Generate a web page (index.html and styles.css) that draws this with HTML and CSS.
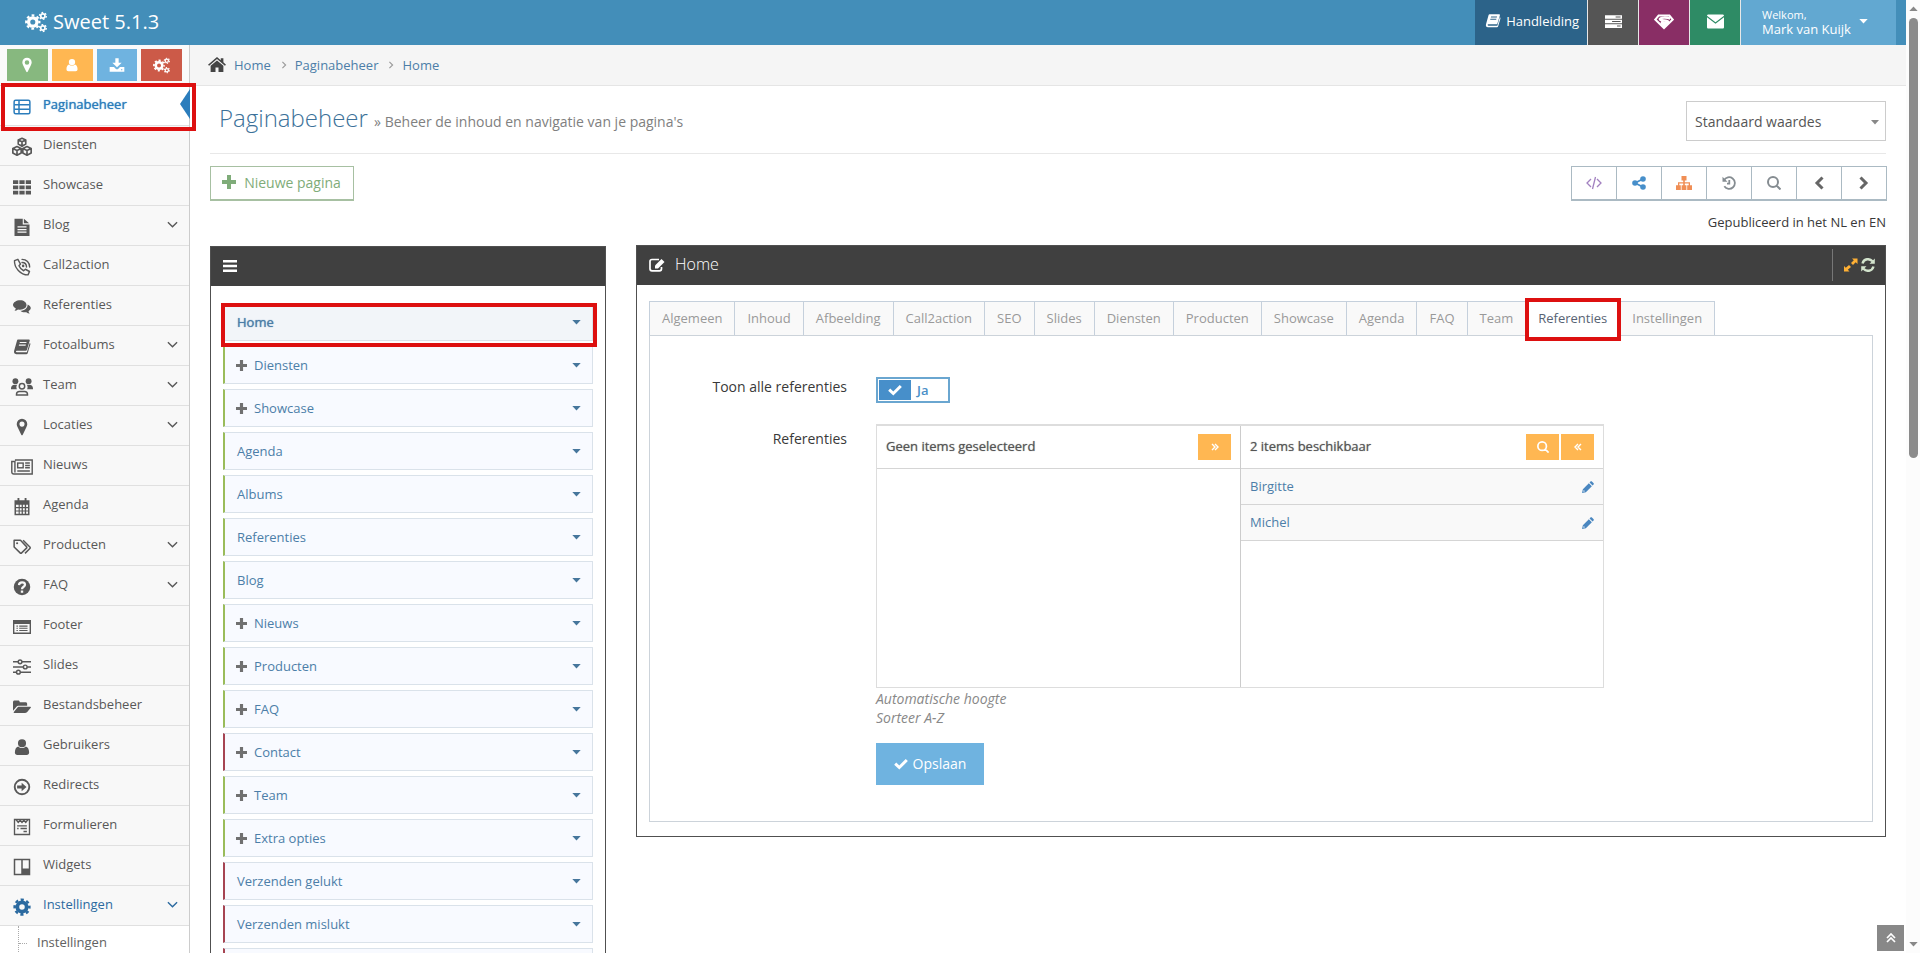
FILE: index.html
```html
<!DOCTYPE html>
<html lang="nl">
<head>
<meta charset="utf-8">
<title>Sweet 5.1.3 - Paginabeheer</title>
<link rel="stylesheet" href="styles.css">
</head>
<body>

<!-- Icon sprite -->
<svg class="sprite" aria-hidden="true">
  <symbol id="i-cogs" viewBox="0 0 24 24">
    <g fill="none" stroke="currentColor">
      <circle cx="8.5" cy="12" r="4.6" stroke-width="3.6"/>
      <circle cx="8.5" cy="12" r="7.2" stroke-width="2.4" stroke-dasharray="3 2.65" stroke-dashoffset="1.5"/>
      <circle cx="19.5" cy="5.4" r="2.3" stroke-width="1.8"/>
      <circle cx="19.5" cy="5.4" r="3.7" stroke-width="1.5" stroke-dasharray="1.9 1.97"/>
      <circle cx="19.5" cy="18.6" r="2.3" stroke-width="1.8"/>
      <circle cx="19.5" cy="18.6" r="3.7" stroke-width="1.5" stroke-dasharray="1.9 1.97"/>
    </g>
  </symbol>
  <symbol id="i-cog" viewBox="0 0 24 24">
    <g fill="none" stroke="currentColor">
      <circle cx="12" cy="12" r="6.2" stroke-width="5"/>
      <circle cx="12" cy="12" r="9.8" stroke-width="3.4" stroke-dasharray="4.2 3.5" stroke-dashoffset="2.1"/>
    </g>
  </symbol>
  <symbol id="i-marker" viewBox="0 0 24 24"><path fill="currentColor" fill-rule="evenodd" d="M12 1a7 7 0 0 1 7 7c0 2-.6 3-1.200 4.300L13 22.200c-.4.900-1.600.900-2 0L6.200 12.300C5.600 11 5 10 5 8a7 7 0 0 1 7-7zm0 3.700a3.400 3.400 0 1 0 0 6.800 3.400 3.400 0 0 0 0-6.800z"/></symbol>
  <symbol id="i-user" viewBox="0 0 24 24"><path fill="currentColor" d="M12 1.500a5.300 5.300 0 0 1 0 10.800 5.300 5.300 0 0 1 0-10.800zM7 11.200c3 3 7 3 10 0 3 .8 4.500 4 4.500 8 0 2-1.300 3.300-3.300 3.300H5.800c-2 0-3.300-1.300-3.300-3.300 0-4 1.500-7.200 4.500-8z"/></symbol>
  <symbol id="i-download" viewBox="0 0 24 24"><path fill="currentColor" fill-rule="evenodd" d="M9.500 2h5v6.500H19l-7 7-7-7h4.500zM1 15h6.500l2.500 2.500c1 1 3 1 4 0l2.500-2.500H23v7H1zm17 3.200v1.600h2v-1.600z"/></symbol>
  <symbol id="i-list" viewBox="0 0 24 24"><g fill="none" stroke="currentColor" stroke-width="2"><rect x="1.500" y="3" width="21" height="18" rx="2"/><path d="M2 9h20M2 15h20M8 3v18"/></g></symbol>
  <symbol id="i-cubes" viewBox="0 0 24 24"><g fill="none" stroke="currentColor" stroke-width="2" stroke-linejoin="round"><path d="M12 1.500l4.500 2v5L12 11 7.500 8.500v-5zM7.500 3.500L12 5.700l4.500-2.200M12 5.700V11"/><path d="M6 11.500l5 2.300v5.400l-5 2.600-5-2.600v-5.400zM1 13.800l5 2.400 5-2.400M6 16.200v5.600"/><path d="M18 11.500l5 2.300v5.400l-5 2.600-5-2.600v-5.400zM13 13.800l5 2.400 5-2.400M18 16.200v5.600"/></g></symbol>
  <symbol id="i-grid" viewBox="0 0 24 24"><path fill="currentColor" d="M0 3h7v5H0zM8.500 3h7v5h-7zM17 3h7v5h-7zM0 10h7v5H0zM8.500 10h7v5h-7zM17 10h7v5h-7zM0 17h7v5H0zM8.500 17h7v5h-7zM17 17h7v5h-7z"/></symbol>
  <symbol id="i-file" viewBox="0 0 24 24"><path fill="currentColor" fill-rule="evenodd" d="M2 1h11v7.500h9V24H2zM14.500 1l7 6h-7zM6 11v1.700h12V11zm0 3.500v1.700h12v-1.700zm0 3.500v1.700h12V18z"/></symbol>
  <symbol id="i-phone" viewBox="0 0 24 24"><g fill="none" stroke="currentColor" stroke-width="1.900" stroke-linecap="round" stroke-linejoin="round"><path d="M6.500 1.800L2 3.500C1.500 13 10 22.500 20 22.500l2-4.500-5.500-3-2.300 2c-3-1.500-5-3.800-6.200-6.700l2-2.200z"/><path d="M12 6c3.500 0 6 2.500 6 6M12 1.800c6 0 10.200 4.200 10.200 10.200"/></g><circle cx="13.500" cy="10.500" r="1.700" fill="currentColor"/></symbol>
  <symbol id="i-comments" viewBox="0 0 24 24"><path fill="currentColor" d="M9.500 3C14.500 3 18 5.800 18 9.300s-3.500 6.200-8.500 6.200c-1 0-1.900-.1-2.800-.300-1.300 1-3 1.700-4.700 1.800 1-1 1.600-2 1.700-3.200C2.100 12.700 0 11.100 0 9.300 0 5.800 4.500 3 9.500 3z"/><path fill="currentColor" d="M19.500 8.500c2.300 1 4.200 2.700 4.200 4.800 0 1.700-1.500 3.200-3 4.200.1 1.200.7 2.200 1.700 3.200-1.800-.1-3.400-.8-4.700-1.800-3.200.6-6-.1-7.800-1.900 5.500-.2 9.800-3.500 9.600-8.500z"/></symbol>
  <symbol id="i-book" viewBox="0 0 24 24"><path fill="currentColor" fill-rule="evenodd" d="M7 2h14c1 0 1.600.8 1.300 1.800L18.500 16c-.2.700-.8 1-1.500 1H5c-1.400 0-1.400 2 0 2h13.500l3.700-12.500c.9.400 1.200 1 .9 2L19.700 20c-.2.900-.8 1.500-1.700 1.500H4.500C2 21.500.8 19.500 1.500 17L5.300 3.500C5.600 2.500 6 2 7 2zm2.200 3.200l-.5 1.500h9l.5-1.500zm-1 3.600l-.5 1.500h9l.5-1.500z"/></symbol>
  <symbol id="i-team" viewBox="0 0 30 24"><g fill="currentColor"><circle cx="6" cy="4" r="4"/><circle cx="24" cy="4" r="4"/><path d="M0 14c0-3 2-5 5-5h3.500c-1.500 2-1.500 4-.5 6H0zM30 14c0-3-2-5-5-5h-3.500c1.500 2 1.500 4 .5 6h8z"/></g><g fill="none" stroke="currentColor" stroke-width="2"><circle cx="15" cy="11" r="3.700"/><path d="M7.500 23v-1c0-2.300 1.500-4 4-4h7c2.500 0 4 1.700 4 4v1z"/></g></symbol>
  <symbol id="i-news" viewBox="0 0 28 22"><g fill="none" stroke="currentColor" stroke-width="1.800"><path d="M5 2h22v18H3.500C2 20 1 19 1 17.500V4h4v14"/><rect x="8.500" y="6" width="7" height="6"/><path d="M18 6h6M18 9h6M18 12h6M8 16h16"/></g></symbol>
  <symbol id="i-calendar" viewBox="0 0 24 24"><path fill="currentColor" fill-rule="evenodd" d="M6 0h2.500v3h7V0H18v3h4v20H2V3h4zM4 9v3h3.500V9zm5 0v3h2.500V9zm4.200 0v3h2.500V9zm4.300 0v3H20V9zM4 13.500v3h3.500v-3zm5 0v3h2.500v-3zm4.200 0v3h2.500v-3zm4.300 0v3H20v-3zM4 18v3h3.500v-3zm5 0v3h2.500v-3zm4.200 0v3h2.500v-3zm4.300 0v3H20v-3z"/></symbol>
  <symbol id="i-tags" viewBox="0 0 24 24"><g fill="none" stroke="currentColor" stroke-width="2" stroke-linejoin="round"><path d="M1.500 3h8.500l8 8.500c.6.600.6 1.400 0 2l-6.500 6.300c-.6.600-1.400.6-2 0L1.500 12z"/><path d="M13.500 3l9 9c.6.600.6 1.400 0 2l-6.500 6.500"/></g><circle cx="5.500" cy="7" r="1.400" fill="currentColor"/></symbol>
  <symbol id="i-question" viewBox="0 0 24 24"><circle cx="12" cy="12" r="11" fill="currentColor"/><path fill="none" stroke="#f8f8f8" stroke-width="3" d="M8 9.500c.3-5 8-4.500 8-.5 0 2.700-4 2.700-4 6"/><path fill="#f8f8f8" d="M10.400 16.700h3.200v3h-3.200z"/></symbol>
  <symbol id="i-listalt" viewBox="0 0 26 22"><path fill="none" stroke="currentColor" stroke-width="2" d="M1 2h24v18H1z"/><path fill="currentColor" d="M1 2h24v4.500H1zM5 9h2v1.500H5zM9 9h12v1.500H9zM5 12.200h2v1.500H5zM9 12.200h12v1.500H9zM5 15.400h2v1.500H5zM9 15.400h12v1.500H9z"/></symbol>
  <symbol id="i-sliders" viewBox="0 0 26 24"><g fill="none" stroke="currentColor" stroke-width="2.100"><path d="M0 4.500h7.500M13 4.500h13M0 12h15M20.500 12H26M0 19.500h5M10.500 19.500H26"/><circle cx="10.200" cy="4.500" r="2.700"/><circle cx="17.700" cy="12" r="2.700"/><circle cx="7.800" cy="19.500" r="2.700"/></g></symbol>
  <symbol id="i-folder" viewBox="0 0 28 22"><path fill="currentColor" d="M0 3.500C0 2 1 1 2.500 1H8c1.500 0 2.500 1 2.500 2.500h9c1.500 0 2.500 1 2.500 2.500v3H9.500c-2 0-3.500.8-4.700 2.200L0 17zM9.500 10.500H27c1 0 1.200.8.6 1.600l-5.500 6.600c-1 1.200-2.200 1.800-3.600 1.800H2c-1 0-1.400-.8-.7-1.600l5-6.400c.9-1.200 1.800-2 3.200-2z"/></symbol>
  <symbol id="i-arrow" viewBox="0 0 24 24"><circle cx="12" cy="12" r="9.700" fill="none" stroke="currentColor" stroke-width="2.500"/><path fill="currentColor" d="M5.500 10h6V6.300l6.500 5.700-6.500 5.700V14h-6z"/></symbol>
  <symbol id="i-form" viewBox="0 0 24 24"><g fill="none" stroke="currentColor" stroke-width="1.800"><path d="M2 2h20v20H2z"/><path d="M4 2l3 4 2.500-3L12 6l2.500-3L17 6l3-4M5.500 10.500h13M5.500 14h2M10 14h8.500M14 18h4.500"/></g></symbol>
  <symbol id="i-widgets" viewBox="0 0 24 24"><path fill="none" stroke="currentColor" stroke-width="2" d="M2 2h20v20H2zM12 2v20"/><path fill="currentColor" d="M12 14h10v8H12z"/></symbol>
  <symbol id="i-angle" viewBox="0 0 12 8"><path fill="none" stroke="currentColor" stroke-width="1.500" d="M1 1l5 5 5-5"/></symbol>
  <symbol id="i-angle-right" viewBox="0 0 6 10"><path fill="none" stroke="currentColor" stroke-width="1.400" d="M1 1l4 4-4 4"/></symbol>
  <symbol id="i-home" viewBox="0 0 24 20"><path fill="currentColor" d="M12 0l5 4.200V1.500h3.500V7L24 10.200l-1.500 1.500L12 2.800 1.500 11.700 0 10.200zM12 4.500l8.500 7.200V20H14v-6h-4v6H3.500v-8.300z"/></symbol>
  <symbol id="i-tasks" viewBox="0 0 24 18"><path fill="currentColor" fill-rule="evenodd" d="M0 0h24v5H0zM15 1.800v1.400h7V1.800zM0 6.500h24v5H0zM10 8.300v1.400h12V8.300zM0 13h24v5H0zM17 14.800v1.400h5v-1.400z"/></symbol>
  <symbol id="i-gem" viewBox="0 0 24 18"><g fill="none" stroke="currentColor"><path stroke-width="2.400" d="M5.500 1.200h13l4 4.800L12 16.300 1.500 6z"/><path stroke-width="3" d="M19.500 5C16 3.300 7.500 3.200 7 5.500s10.500 1 10 3.500c-.4 1.800-5 2-9 .6"/></g><path fill="currentColor" d="M8 11.500h8L12 16z"/></symbol>
  <symbol id="i-mail" viewBox="0 0 24 20"><path fill="currentColor" d="M2 0h20c1.200 0 2 .8 2 2l-12 9L0 2C0 .8.800 0 2 0zM0 4l12 9 12-9v14c0 1.200-.8 2-2 2H2c-1.200 0-2-.8-2-2z"/></symbol>
  <symbol id="i-caret" viewBox="0 0 10 6"><path fill="currentColor" d="M0 0h10L5 5.500z"/></symbol>
  <symbol id="i-plus" viewBox="0 0 14 14"><path fill="currentColor" d="M5 0h4v5h5v4H9v5H5V9H0V5h5z"/></symbol>
  <symbol id="i-code" viewBox="0 0 16 12"><path fill="none" stroke="currentColor" stroke-width="1.300" d="M5 2L1 6l4 4M11 2l4 4-4 4M9.500 0l-3 12"/></symbol>
  <symbol id="i-share" viewBox="0 0 14 14"><g fill="currentColor"><circle cx="11" cy="3" r="2.800"/><circle cx="3" cy="7" r="2.800"/><circle cx="11" cy="11" r="2.800"/></g><path fill="none" stroke="currentColor" stroke-width="1.800" d="M11 3L3 7l8 4"/></symbol>
  <symbol id="i-sitemap" viewBox="0 0 16 14"><path fill="currentColor" d="M5.500 0h5v4.500h-1.700V6.300H14v3h2V14h-4.800V9.300h1.500V7.600H8.800v1.700h1.600V14H5.600V9.300h1.600V7.600H3.300v1.700h1.500V14H0V9.300h2v-3h5.200V4.500H5.500z"/></symbol>
  <symbol id="i-history" viewBox="0 0 14 14"><path fill="none" stroke="currentColor" stroke-width="1.800" d="M2 4.200a5.800 5.800 0 1 1 .3 6.100M7.300 4v3.700H5"/><path fill="currentColor" d="M.5.800v5h5z"/></symbol>
  <symbol id="i-search" viewBox="0 0 14 14"><path fill="none" stroke="currentColor" stroke-width="2" d="M6 1a5 5 0 1 1 0 10A5 5 0 0 1 6 1zM9.500 9.500l4 4"/></symbol>
  <symbol id="i-prev" viewBox="0 0 10 14"><path fill="none" stroke="currentColor" stroke-width="3" d="M8.500 1.500L3 7l5.500 5.500"/></symbol>
  <symbol id="i-next" viewBox="0 0 10 14"><path fill="none" stroke="currentColor" stroke-width="3" d="M1.500 1.500L7 7l-5.500 5.500"/></symbol>
  <symbol id="i-bars" viewBox="0 0 14 12"><path fill="currentColor" d="M0 0h14v2.600H0zM0 4.700h14v2.600H0zM0 9.400h14V12H0z"/></symbol>
  <symbol id="i-edit" viewBox="0 0 16 14"><path fill="none" stroke="currentColor" stroke-width="1.700" d="M10 1.500H3C1.700 1.500 1 2.200 1 3.500v7.300c0 1.300.7 2 2 2h7.500c1.300 0 2-.7 2-2V9"/><path fill="currentColor" d="M12.500 1L15.500 4 9 10.500H6v-3z"/></symbol>
  <symbol id="i-expand" viewBox="0 0 14 14"><path fill="currentColor" d="M8 .5h5.500V6l-1.800-1.800L9 7 7 5l2.800-2.700zM0 8l1.800 1.800L5 7l2 2-3.200 2.700L5.500 13.500H0z"/></symbol>
  <symbol id="i-refresh" viewBox="0 0 14 14"><path fill="none" stroke="currentColor" stroke-width="2.400" d="M1.500 5.500c1.500-5 7-5.500 10-2.200M12.500 8.500c-1.500 5-7 5.500-10 2.200"/><path fill="currentColor" d="M13.800.5v5.300H8.500zM.2 13.500V8.200h5.300z"/></symbol>
  <symbol id="i-check" viewBox="0 0 14 11"><path fill="none" stroke="currentColor" stroke-width="3" d="M1.200 5.200L5.300 9l7.500-7.500"/></symbol>
  <symbol id="i-dbl-right" viewBox="0 0 8 8"><path fill="none" stroke="currentColor" stroke-width="1.400" d="M1 1l3 3-3 3M4 1l3 3-3 3"/></symbol>
  <symbol id="i-dbl-left" viewBox="0 0 8 8"><path fill="none" stroke="currentColor" stroke-width="1.400" d="M7 1L4 4l3 3M4 1L1 4l3 3"/></symbol>
  <symbol id="i-dbl-up" viewBox="0 0 10 10"><path fill="none" stroke="currentColor" stroke-width="1.700" d="M1 5l4-4 4 4M1 9l4-4 4 4"/></symbol>
  <symbol id="i-pencil" viewBox="0 0 14 14"><path fill="currentColor" fill-rule="evenodd" d="M10.500 0c.6 0 3.500 2.900 3.500 3.500L12.300 5.200 8.800 1.700zM8 2.500L11.500 6 4.500 13 0 14l1-4.500zM2 10.500l-.5 2 2-.5z"/></symbol>
</svg>

<div class="window">
<div class="page">

<header class="navbar">
  <a href="#" class="brand"><svg class="icon-brand"><use href="#i-cogs"/></svg>Sweet 5.1.3</a>
  <nav class="navbar-nav">
    <a href="#" class="nav-manual"><svg class="icon-16"><use href="#i-book"/></svg>Handleiding</a>
    <a href="#" class="nav-icon grey" aria-label="Taken"><svg class="icon-17"><use href="#i-tasks"/></svg></a>
    <a href="#" class="nav-icon purple" aria-label="Super"><svg class="icon-20"><use href="#i-gem"/></svg></a>
    <a href="#" class="nav-icon green" aria-label="Berichten"><svg class="icon-17"><use href="#i-mail"/></svg></a>
    <a href="#" class="nav-user"><span><small>Welkom,</small>Mark van Kuijk</span><svg class="caret"><use href="#i-caret"/></svg></a>
  </nav>
</header>

<div class="main">

<aside class="sidebar">
  <div class="shortcuts">
    <button class="green" aria-label="Locatie"><svg class="icon-16"><use href="#i-marker"/></svg></button>
    <button class="orange" aria-label="Gebruiker"><svg class="icon-14"><use href="#i-user"/></svg></button>
    <button class="blue" aria-label="Download"><svg class="icon-16"><use href="#i-download"/></svg></button>
    <button class="red" aria-label="Opties"><svg class="icon-17"><use href="#i-cogs"/></svg></button>
  </div>
  <ul class="menu">
    <li class="active"><a href="#"><svg><use href="#i-list"/></svg><span>Paginabeheer</span></a><i class="mark"></i></li>
    <li><a href="#"><svg class="wide"><use href="#i-cubes"/></svg><span>Diensten</span></a></li>
    <li><a href="#"><svg><use href="#i-grid"/></svg><span>Showcase</span></a></li>
    <li><a href="#"><svg><use href="#i-file"/></svg><span>Blog</span><svg class="angle"><use href="#i-angle"/></svg></a></li>
    <li><a href="#"><svg><use href="#i-phone"/></svg><span>Call2action</span></a></li>
    <li><a href="#"><svg><use href="#i-comments"/></svg><span>Referenties</span></a></li>
    <li><a href="#"><svg><use href="#i-book"/></svg><span>Fotoalbums</span><svg class="angle"><use href="#i-angle"/></svg></a></li>
    <li><a href="#"><svg class="wide"><use href="#i-team"/></svg><span>Team</span><svg class="angle"><use href="#i-angle"/></svg></a></li>
    <li><a href="#"><svg><use href="#i-marker"/></svg><span>Locaties</span><svg class="angle"><use href="#i-angle"/></svg></a></li>
    <li><a href="#"><svg class="wide"><use href="#i-news"/></svg><span>Nieuws</span></a></li>
    <li><a href="#"><svg><use href="#i-calendar"/></svg><span>Agenda</span></a></li>
    <li><a href="#"><svg><use href="#i-tags"/></svg><span>Producten</span><svg class="angle"><use href="#i-angle"/></svg></a></li>
    <li><a href="#"><svg><use href="#i-question"/></svg><span>FAQ</span><svg class="angle"><use href="#i-angle"/></svg></a></li>
    <li><a href="#"><svg><use href="#i-listalt"/></svg><span>Footer</span></a></li>
    <li><a href="#"><svg><use href="#i-sliders"/></svg><span>Slides</span></a></li>
    <li><a href="#"><svg><use href="#i-folder"/></svg><span>Bestandsbeheer</span></a></li>
    <li><a href="#"><svg><use href="#i-user"/></svg><span>Gebruikers</span></a></li>
    <li><a href="#"><svg><use href="#i-arrow"/></svg><span>Redirects</span></a></li>
    <li><a href="#"><svg><use href="#i-form"/></svg><span>Formulieren</span></a></li>
    <li><a href="#"><svg><use href="#i-widgets"/></svg><span>Widgets</span></a></li>
    <li class="open"><a href="#"><svg><use href="#i-cog"/></svg><span>Instellingen</span><svg class="angle"><use href="#i-angle"/></svg></a>
      <ul class="submenu">
        <li><a href="#">Instellingen</a></li>
      </ul>
    </li>
  </ul>
</aside>

<main class="content">
  <nav class="breadcrumbs">
    <svg class="icon-home"><use href="#i-home"/></svg>
    <a href="#">Home</a>
    <svg class="sep"><use href="#i-angle-right"/></svg>
    <a href="#">Paginabeheer</a>
    <svg class="sep"><use href="#i-angle-right"/></svg>
    <a href="#">Home</a>
  </nav>

  <div class="page-content">
    <div class="page-header">
      <h1>Paginabeheer <small>» Beheer de inhoud en navigatie van je pagina's</small></h1>
      <div class="select">
        <select aria-label="Waardes"><option>Standaard waardes</option></select>
        <svg class="caret"><use href="#i-caret"/></svg>
      </div>
    </div>

    <div class="toolbar">
      <button class="btn-new"><svg class="icon-14"><use href="#i-plus"/></svg>Nieuwe pagina</button>
      <div class="btn-group">
        <button class="purple" aria-label="Code"><svg class="icon-16"><use href="#i-code"/></svg></button>
        <button class="blue" aria-label="Delen"><svg class="icon-14"><use href="#i-share"/></svg></button>
        <button class="orange" aria-label="Sitemap"><svg class="icon-16"><use href="#i-sitemap"/></svg></button>
        <button aria-label="Geschiedenis"><svg class="icon-14"><use href="#i-history"/></svg></button>
        <button aria-label="Zoeken"><svg class="icon-14"><use href="#i-search"/></svg></button>
        <button class="dark" aria-label="Vorige"><svg class="icon-14"><use href="#i-prev"/></svg></button>
        <button class="dark" aria-label="Volgende"><svg class="icon-14"><use href="#i-next"/></svg></button>
      </div>
    </div>
    <p class="published">Gepubliceerd in het NL en EN</p>

    <div class="columns">
      <section class="widget tree">
        <div class="widget-header"><svg class="icon-14"><use href="#i-bars"/></svg></div>
        <ul class="pages">
          <li class="selected"><a href="#">Home</a><svg class="caret"><use href="#i-caret"/></svg></li>
          <li><svg class="plus"><use href="#i-plus"/></svg><a href="#">Diensten</a><svg class="caret"><use href="#i-caret"/></svg></li>
          <li><svg class="plus"><use href="#i-plus"/></svg><a href="#">Showcase</a><svg class="caret"><use href="#i-caret"/></svg></li>
          <li><a href="#">Agenda</a><svg class="caret"><use href="#i-caret"/></svg></li>
          <li><a href="#">Albums</a><svg class="caret"><use href="#i-caret"/></svg></li>
          <li><a href="#">Referenties</a><svg class="caret"><use href="#i-caret"/></svg></li>
          <li><a href="#">Blog</a><svg class="caret"><use href="#i-caret"/></svg></li>
          <li><svg class="plus"><use href="#i-plus"/></svg><a href="#">Nieuws</a><svg class="caret"><use href="#i-caret"/></svg></li>
          <li><svg class="plus"><use href="#i-plus"/></svg><a href="#">Producten</a><svg class="caret"><use href="#i-caret"/></svg></li>
          <li><svg class="plus"><use href="#i-plus"/></svg><a href="#">FAQ</a><svg class="caret"><use href="#i-caret"/></svg></li>
          <li class="offline"><svg class="plus"><use href="#i-plus"/></svg><a href="#">Contact</a><svg class="caret"><use href="#i-caret"/></svg></li>
          <li><svg class="plus"><use href="#i-plus"/></svg><a href="#">Team</a><svg class="caret"><use href="#i-caret"/></svg></li>
          <li><svg class="plus"><use href="#i-plus"/></svg><a href="#">Extra opties</a><svg class="caret"><use href="#i-caret"/></svg></li>
          <li class="offline"><a href="#">Verzenden gelukt</a><svg class="caret"><use href="#i-caret"/></svg></li>
          <li class="offline"><a href="#">Verzenden mislukt</a><svg class="caret"><use href="#i-caret"/></svg></li>
          <li class="offline"></li>
        </ul>
      </section>

      <section class="widget editor">
        <div class="widget-header">
          <svg class="icon-16"><use href="#i-edit"/></svg>
          <h2>Home</h2>
          <div class="widget-tools">
            <svg class="icon-14 expand"><use href="#i-expand"/></svg>
            <svg class="icon-14 refresh"><use href="#i-refresh"/></svg>
          </div>
        </div>
        <div class="widget-body">
          <nav class="tabs">
            <a href="#">Algemeen</a>
            <a href="#">Inhoud</a>
            <a href="#">Afbeelding</a>
            <a href="#">Call2action</a>
            <a href="#">SEO</a>
            <a href="#">Slides</a>
            <a href="#">Diensten</a>
            <a href="#">Producten</a>
            <a href="#">Showcase</a>
            <a href="#">Agenda</a>
            <a href="#">FAQ</a>
            <a href="#">Team</a>
            <a href="#" class="active">Referenties</a>
            <a href="#">Instellingen</a>
          </nav>
          <form class="tab-content">
            <div class="form-row">
              <label for="showAll">Toon alle referenties</label>
              <div class="switch">
                <input type="checkbox" id="showAll" checked>
                <svg class="icon-14"><use href="#i-check"/></svg>
                <b>Ja</b>
              </div>
            </div>
            <div class="form-row">
              <span class="form-label">Referenties</span>
              <div class="field">
                <div class="duallist">
                  <div class="list">
                    <div class="list-head"><span>Geen items geselecteerd</span><button type="button" aria-label="Alles verwijderen"><svg class="icon-8"><use href="#i-dbl-right"/></svg></button></div>
                  </div>
                  <div class="list">
                    <div class="list-head"><span>2 items beschikbaar</span><button type="button" aria-label="Zoeken"><svg class="icon-12"><use href="#i-search"/></svg></button><button type="button" aria-label="Alles toevoegen"><svg class="icon-8"><use href="#i-dbl-left"/></svg></button></div>
                    <div class="list-item"><a href="#">Birgitte</a><svg class="icon-12"><use href="#i-pencil"/></svg></div>
                    <div class="list-item"><a href="#">Michel</a><svg class="icon-12"><use href="#i-pencil"/></svg></div>
                  </div>
                </div>
                <p class="hint">Automatische hoogte<br>Sorteer A-Z</p>
                <button type="button" class="btn-save"><svg class="icon-14"><use href="#i-check"/></svg>Opslaan</button>
              </div>
            </div>
          </form>
        </div>
      </section>
    </div>
  </div>
</main>

</div>
<button class="scroll-up" aria-label="Naar boven"><svg class="icon-10"><use href="#i-dbl-up"/></svg></button>
</div>

<!-- Scrollbar -->
<div class="scrollbar">
  <svg class="caret up"><use href="#i-caret"/></svg>
  <div class="track"><div class="thumb"></div></div>
  <svg class="caret"><use href="#i-caret"/></svg>
</div>
</div>

</body>
</html>
```
FILE: styles.css
```css
* { box-sizing: border-box; }
body { margin: 0; background-color: #fff; color: #393939; font-family: 'Open Sans', sans-serif; font-size: 13px; line-height: 20px; overflow: hidden; }
a { color: #4c7ea8; text-decoration: none; }
ul { list-style: none; margin: 0; padding: 0; }
h1, h2, p { margin: 0; font-weight: normal; }
button { border: 0; padding: 0; font-family: inherit; cursor: pointer; display: flex; align-items: center; justify-content: center; }
svg { flex: none; display: block; }
.sprite { position: absolute; width: 0; height: 0; }

/* Icon sizes */
.icon-8 { width: 8px; height: 8px; }
.icon-10 { width: 10px; height: 10px; }
.icon-12 { width: 12px; height: 12px; }
.icon-14 { width: 14px; height: 14px; }
.icon-16 { width: 16px; height: 16px; }
.icon-17 { width: 17px; height: 17px; }
.icon-20 { width: 20px; height: 20px; }
.caret { width: 9px; height: 5px; }

.window { display: flex; height: 100vh; }
.page { position: relative; flex: 1; min-width: 0; overflow: hidden; }

/* Top bar */
.navbar { display: flex; justify-content: space-between; height: 45px; padding: 0 10px 0 25px; background-color: #438eb9; }
.brand { display: flex; align-items: center; gap: 6px; color: #fff; font-size: 20px; padding-bottom: 1px; }
.icon-brand { width: 22px; height: 22px; }
.navbar-nav { display: flex; }
.navbar-nav a { display: flex; align-items: center; color: #fff; }
.nav-manual { gap: 5px; padding: 0 8px 3px 10px; background-color: #2c6389; }
.nav-icon { justify-content: center; width: 51px; padding-bottom: 2px; border-left: 1px solid #e8e8e8; }
.nav-icon.grey { background-color: #555; }
.nav-icon.purple { background-color: #892e65; }
.nav-icon.green { background-color: #2e8b65; }
.nav-user { gap: 8px; width: 156px; padding: 0 0 2px 21px; border-left: 1px solid #e8e8e8; background-color: #62a8d1; line-height: 14px; }
.nav-user small { display: block; font-size: 11px; line-height: 14px; }

.main { display: flex; }

/* Sidebar */
.sidebar { width: 190px; border-right: 1px solid #ccc; background-color: #f8f8f8; flex: none; }
.shortcuts { display: flex; gap: 4px; height: 40px; padding: 4px 7px; background-color: #fafafa; }
.shortcuts button { flex: 1; color: #fff; }
.shortcuts .green { background-color: #87b87f; }
.shortcuts .orange { background-color: #ffb752; }
.shortcuts .blue { background-color: #6fb3e0; }
.shortcuts .red { background-color: #cc5a48; }
.menu > li { position: relative; border-top: 1px solid #e0e0e0; }
.menu > li > a { display: flex; align-items: center; height: 39px; padding: 2px 11px 0 13px; color: #585858; }
.menu a > svg { width: 18px; height: 18px; margin-right: 12px; }
.menu a > .wide { width: 22px; height: 20px; margin: 0 10px 0 -2px; }
.menu span { flex: 1; padding-bottom: 6px; }
.menu a > .angle { width: 11px; height: 8px; margin: 0 0 3px; }
.menu > .active { background-color: #fff; }
.menu > .active > a { color: #2b7dbc; }
.active span { text-shadow: 0 0 1px #2b7dbc; }
.menu > .open > a { color: #2b6aa0; }
/* Blue pointer on the current item */
.mark { position: absolute; top: 3px; right: -1px; width: 10px; height: 30px; background-color: #2b7dbc; clip-path: polygon(100% 0, 100% 100%, 0 50%); }
.submenu { border-top: 1px solid #e0e0e0; background-color: #fff; }
.submenu li { position: relative; margin-left: 18px; border-left: 1px dotted #aaa; }
.submenu a { display: block; padding: 6px 0 8px 18px; color: #616161; }
.submenu li::before { content: ""; position: absolute; top: 17px; left: 0; width: 8px; border-top: 1px dotted #aaa; }

/* Highlight frames */
.menu > .active::after, .pages .selected::after, .tabs .active::after { content: ""; position: absolute; z-index: 2; border: 4px solid #dd1010; pointer-events: none; }
.menu > .active::after { inset: -3px -7px -6px 1px; }
.pages .selected::after { inset: -1px -5px -7px -4px; }
.tabs .active::after { inset: -4px -2px -5px -1px; }

/* Content */
.content { flex: 1; min-width: 0; }
.breadcrumbs { display: flex; align-items: center; height: 41px; padding: 0 18px 1px; border-bottom: 1px solid #e5e5e5; background-color: #f5f5f5; }
.icon-home { width: 18px; height: 15px; margin-right: 8px; color: #444; }
.sep { width: 6px; height: 8px; margin: 0 8px 0 10px; color: #999; }
.page-content { padding: 15px 20px 0; }
.page-header { display: flex; align-items: center; justify-content: space-between; height: 53px; padding: 0 0 12px 9px; border-bottom: 1px solid #e8e8e8; }
h1 { color: #3c7199; font-size: 24px; font-weight: 300; line-height: 32px; padding-bottom: 3px; }
h1 small { color: #808080; font-size: 14px; font-weight: normal; }
.select { position: relative; width: 200px; }
select { appearance: none; width: 100%; height: 40px; padding: 0 8px; border: 1px solid #ccc; border-radius: 0; background-color: #fff; color: #555; font: 14px 'Open Sans', sans-serif; }
.select .caret { position: absolute; top: 19px; right: 7px; width: 8px; color: #888; }

.toolbar { display: flex; justify-content: space-between; margin-top: 12px; }
.btn-new, .btn-group button { height: 35px; border: 1px solid #abbac3; border-bottom-width: 2px; background-color: #fff; }
.btn-new { width: 144px; padding: 0 1px 2px 0; gap: 8px; border-color: #a7c0a2; color: #7fac79; font-size: 14px; }
.btn-group { display: flex; margin-right: -1px; }
.btn-group button { width: 46px; margin-left: -1px; color: #858c91; }
.btn-group .purple { color: #a281c0; }
.btn-group .blue { color: #478fca; }
.btn-group .orange { color: #f08e55; }
.btn-group .dark { color: #666; }
.published { margin: 11px 0 13px; text-align: right; }

.columns { display: flex; align-items: flex-start; gap: 30px; }
.widget { border: 1px solid #505050; }
.tree { width: 396px; flex: none; margin-top: 1px; }
.editor { flex: 1; min-width: 0; }
.widget-header { display: flex; align-items: center; gap: 10px; height: 39px; padding: 0 10px 2px 12px; background-color: #404040; color: #fff; }
.widget-header h2 { flex: 1; font-size: 16px; font-weight: 300; padding-bottom: 1px; }
.widget-tools { display: flex; align-items: center; gap: 3px; height: 32px; padding-left: 11px; border-left: 1px solid #777; }
.expand { color: #ffb034; }
.refresh { color: #d3e4cd; }

/* Page tree */
.pages { display: flex; flex-direction: column; gap: 5px; padding: 17px 12px; }
.pages li { position: relative; display: flex; align-items: center; gap: 6px; height: 38px; padding: 0 11px; border: 1px solid #dae2ea; border-left: 2px solid #9abc5a; background-color: #f8faff; }
.pages a { flex: 1; padding: 0 0 1px 1px; }
.pages .plus { width: 11px; height: 11px; color: #707070; }
.pages .caret { color: #46769c; }
.pages .offline { border-left-color: #a64452; }
.pages .selected { background-color: #f2f5f9; }
.selected a { text-shadow: 0 0 1px #4c7ea8; }

/* Tabs */
.widget-body { padding: 16px 12px 14px; }
.tabs { display: flex; }
.tabs a { height: 34px; padding: 6px 12px 0; border: 1px solid #c5d0dc; border-width: 1px 0 0 1px; background-color: #f9f9f9; color: #999; }
.tabs a:last-child { border-right-width: 1px; }
.tabs .active { position: relative; height: 35px; margin-bottom: -1px; background-color: #fff; color: #576373; }
.tab-content { min-height: 487px; padding: 40px 14px 36px; border: 1px solid #ccd3da; }
.form-row { display: grid; grid-template-columns: 183px minmax(0, 728px); gap: 29px; margin-bottom: 21px; }
.form-row:last-child { margin-bottom: 0; }
.form-row label, .form-label { font-size: 14px; text-align: right; padding-top: 1px; }
.form-label { padding-top: 5px; }

.switch { display: flex; align-items: center; gap: 6px; width: 74px; height: 26px; margin-top: 1px; position: relative; border: 2px solid #6aa6d0; color: #fff; }
.switch input { appearance: none; width: 32px; height: 20px; margin: 0 0 0 1px; background-color: #478fca; }
.switch svg { position: absolute; left: 10px; }
.switch b { color: #4a8fc7; font-weight: 600; }

/* Dual list */
.duallist { display: grid; grid-template-columns: 1fr 1fr; min-height: 264px; border: 1px solid #ddd; border-top-width: 2px; }
.list + .list { border-left: 1px solid #ccc; }
.list-head { display: flex; align-items: center; gap: 2px; height: 43px; padding: 0 9px; border-bottom: 1px solid #d5d5d5; }
.list-head span { flex: 1; color: #555; text-shadow: 0 0 1px #888; padding-bottom: 2px; }
.list-head button { width: 33px; height: 26px; background-color: #ffb752; color: #fff; }
.list-item { display: flex; align-items: center; justify-content: space-between; height: 36px; padding: 0 9px; border-bottom: 1px solid #d5d5d5; background-color: #f9f9f9; color: #4a87c0; }
.list-item a { padding-bottom: 1px; }
.hint { margin: 1px 0 16px; color: #888; font-size: 14px; font-style: italic; line-height: 19px; }
.btn-save { width: 108px; height: 42px; padding-bottom: 1px; gap: 5px; background-color: #6fb3e0; color: #fff; font-size: 14px; }

.scroll-up { position: absolute; right: 2px; bottom: 2px; width: 27px; height: 26px; background-color: #888; color: #fff; }

.scrollbar { display: flex; flex-direction: column; align-items: center; width: 14px; padding: 6px 0; background-color: #fcfcfc; color: #888; }
.scrollbar .track { flex: 1; padding: 7px 0; }
.scrollbar .thumb { width: 9px; height: 48%; border-radius: 5px; background-color: #8b8b8b; }
.scrollbar .up { transform: rotate(180deg); }
```
